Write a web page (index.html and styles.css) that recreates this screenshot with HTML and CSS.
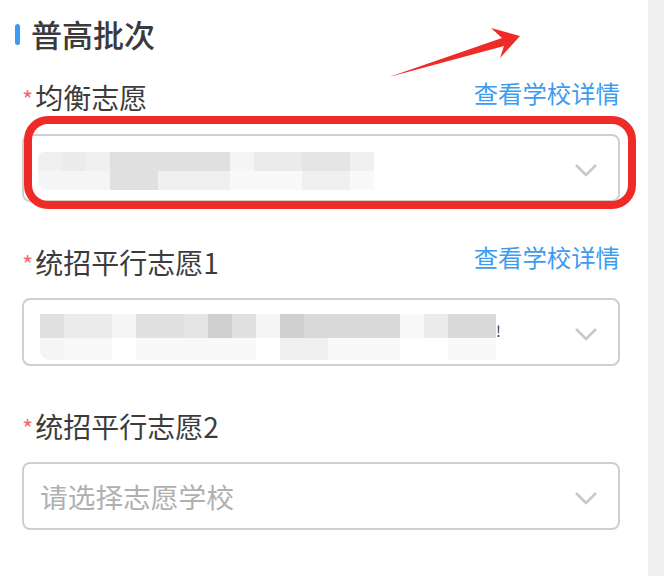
FILE: index.html
```html
<!DOCTYPE html>
<html lang="zh">
<head>
<meta charset="utf-8">
<title>普高批次</title>
<link rel="stylesheet" href="styles.css">
</head>
<body>
<div class="page">
  <main class="main">
    <h1 class="title"><span class="title-bar"></span>普高批次</h1>

    <section class="group">
      <div class="label-row">
        <label class="label label-first"><span class="star">*</span>均衡志愿</label>
        <a class="link">查看学校详情</a>
      </div>
      <div class="field">
        <div class="mosaic m1">
          <i class="s2 tl"></i><i class="s3"></i><i class="s2"></i><i class="s5"></i><i class="s5"></i><i class="s5"></i><i class="s5"></i><i class="s5"></i><i class="s1b"></i><i class="s3"></i><i class="s3"></i><i class="s4"></i><i class="s4"></i><i class="s2"></i>
          <i class="s1b bl"></i><i class="s1b"></i><i class="s1b"></i><i class="s5"></i><i class="s5"></i><i class="s2"></i><i class="s2"></i><i class="s2"></i><i class="s1"></i><i class="s1"></i><i class="s1"></i><i class="s2"></i><i class="s2"></i><i class="s1"></i>
        </div>
        <svg class="chev" viewBox="0 0 24 14"><path d="M2 2l10 10L22 2"/></svg>
        <div class="highlight"></div>
      </div>
    </section>

    <section class="group">
      <div class="label-row">
        <label class="label"><span class="star">*</span>统招平行志愿1</label>
        <a class="link">查看学校详情</a>
      </div>
      <div class="field">
        <div class="mosaic m2">
          <i class="s5"></i><i class="s3"></i><i class="s3"></i><i class="s1b"></i><i class="s5"></i><i class="s5"></i><i class="s4"></i><i class="s7"></i><i class="s5"></i><i class="s1b"></i><i class="s7"></i><i class="s6"></i><i class="s6"></i><i class="s6"></i><i class="s6"></i><i class="s1"></i><i class="s3"></i><i class="s6"></i><i class="s6"></i>
          <i class="s1b bl"></i><i class="s1"></i><i class="s1"></i><i class="s0"></i><i class="s1"></i><i class="s1"></i><i class="s1"></i><i class="s1"></i><i class="s1"></i><i class="s0"></i><i class="s2"></i><i class="s2"></i><i class="s1"></i><i class="s1"></i><i class="s1"></i><i class="s0"></i><i class="s0"></i><i class="s1"></i><i class="s1"></i>
        </div>
        <span class="stray">!</span>
        <svg class="chev" viewBox="0 0 24 14"><path d="M2 2l10 10L22 2"/></svg>
      </div>
    </section>

    <section class="group">
      <div class="label-row">
        <label class="label"><span class="star">*</span>统招平行志愿2</label>
      </div>
      <div class="field">
        <span class="placeholder">请选择志愿学校</span>
        <svg class="chev" viewBox="0 0 24 14"><path d="M2 2l10 10L22 2"/></svg>
      </div>
    </section>

    <svg class="arrow" viewBox="0 0 140 60"><path d="M1 51L114 12 103 2 132 10 112 32 116 20Z"/></svg>
  </main>
  <aside class="side"></aside>
</div>
</body>
</html>
```
FILE: styles.css
```css
* { box-sizing: border-box; }
html, body { margin: 0; padding: 0; background: #fff; }
body { font-family: "Noto Sans CJK SC", "Noto Sans", sans-serif; }
.page { display: flex; width: 664px; height: 576px; overflow: hidden; }
.main { position: relative; width: 648px; padding: 0 28px 0 22px; }
.side { width: 16px; background: #f0f0f0; }

.title {
  display: flex; align-items: center; height: 36px; margin: 16px 0 0 -7px;
  font-size: 31px; line-height: 36px; font-weight: 500; color: #3a3a3a;
}
.title-bar { width: 5px; height: 21px; margin-right: 11px; border-radius: 3px; background: #3a9bf5; }

.group { margin-bottom: 32px; }
.title + .group { margin-top: 18px; }
.label-row { display: flex; justify-content: space-between; align-items: flex-start; height: 64px; }
.label { font-size: 28px; line-height: 56px; color: #3c3c3c; }
.label-first { line-height: 54px; }
.star { color: #f46a6a; font-size: 24px; margin-right: 2px; }
.link { font-size: 24.4px; line-height: 46px; color: #3d9cf0; }

.field {
  position: relative; display: flex; align-items: center;
  height: 68px; padding: 0 16px; background: #fff;
  border: 2px solid #cfcfcf; border-radius: 8px;
}
.placeholder { font-size: 27.7px; color: #b0b0b0; }
.chev { position: absolute; right: 20px; top: 27px; width: 24px; height: 14px; }
.chev path { fill: none; stroke: #c8c8c8; stroke-width: 2.6; }

.mosaic { display: grid; }
.mosaic i { display: block; }
.m1 { grid-template-columns: repeat(14, 24px); grid-template-rows: 19px 19px; margin: 5px 0 0 -2px; }
.m2 { grid-template-columns: repeat(19, 24px); grid-template-rows: 24px 22px; margin-top: 10px; }
.tl { border-top-left-radius: 6px; }
.bl { border-bottom-left-radius: 10px; }
.s0 { background: #ffffff; }
.s1 { background: #f9f9f9; }
.s1b { background: #f5f5f5; }
.s2 { background: #f0f0f0; }
.s3 { background: #ebebeb; }
.s4 { background: #e5e5e5; }
.s5 { background: #e0e0e0; }
.s6 { background: #d9d9d9; }
.s7 { background: #d0d0d0; }
.stray { font-size: 15px; line-height: 15px; color: #444; margin: -4px 0 0 0; }

.highlight {
  position: absolute; left: 0; top: -20px; right: -18px; bottom: -9px;
  border: 8px solid #ee2b26; border-radius: 24px;
  pointer-events: none;
}
.arrow { position: absolute; left: 388px; top: 26px; width: 140px; height: 60px; }
.arrow path { fill: #ee2b26; }
```
